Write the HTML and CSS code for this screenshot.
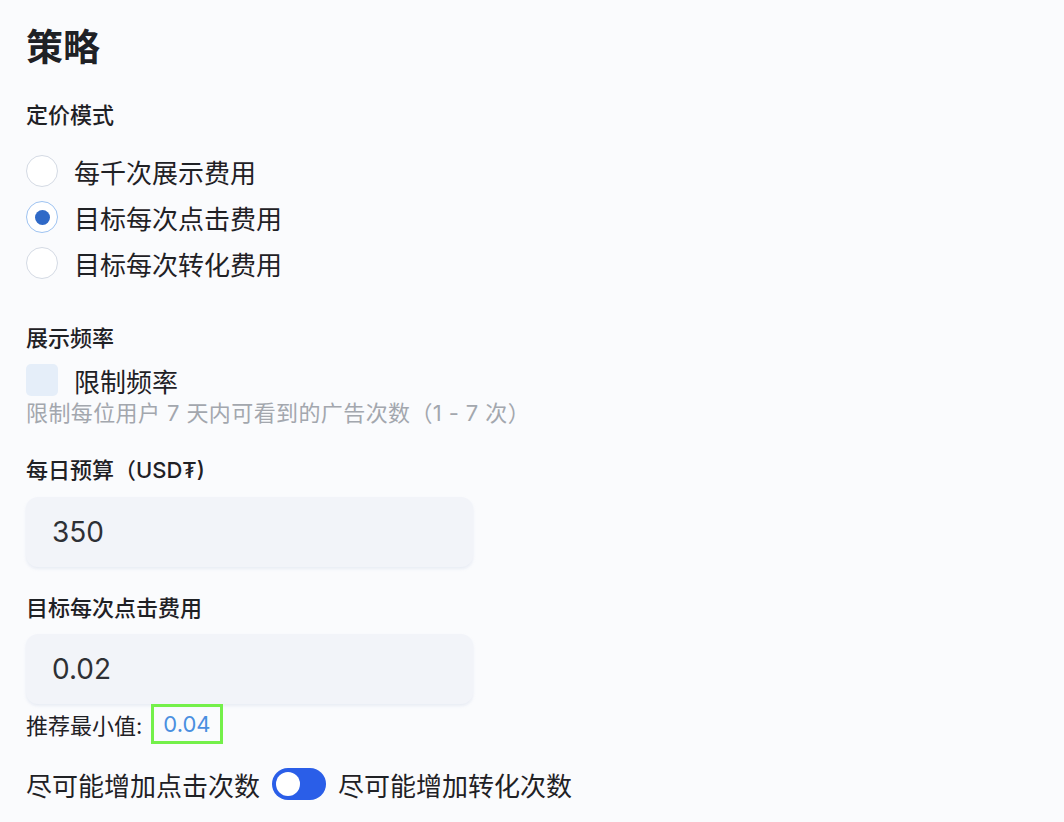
FILE: index.html
```html
<!DOCTYPE html>
<html lang="zh-CN">
  <head>
    <meta charset="UTF-8" />
    <meta name="viewport" content="width=device-width, initial-scale=1.0" />
    <title>策略</title>
    <link rel="stylesheet" href="styles.css">
  </head>
  <body>
    <h1 class="title">策略</h1>

    <div class="field-label pricing-label">定价模式</div>
    <div class="radio-group">
      <label class="radio-row">
        <span class="radio"></span>
        <span>每千次展示费用</span>
      </label>
      <label class="radio-row">
        <span class="radio checked"></span>
        <span>目标每次点击费用</span>
      </label>
      <label class="radio-row">
        <span class="radio"></span>
        <span>目标每次转化费用</span>
      </label>
    </div>

    <div class="field-label freq-label">展示频率</div>
    <label class="check-row">
      <span class="checkbox"></span>
      <span>限制频率</span>
    </label>
    <div class="helper">限制每位用户 7 天内可看到的广告次数（1 - 7 次）</div>

    <div class="field-label budget-label">每日预算（USD₮)</div>
    <div class="input-box">350</div>

    <div class="field-label cpc-label">目标每次点击费用</div>
    <div class="input-box">0.02</div>
    <div class="tip-row">
      <span>推荐最小值:</span>
      <span class="tip-value">0.04</span>
    </div>

    <div class="toggle-row">
      <span>尽可能增加点击次数</span>
      <span class="toggle"><span class="knob"></span></span>
      <span>尽可能增加转化次数</span>
    </div>
  </body>
</html>
```

FILE: styles.css
```css
body {
  margin: 0;
  padding: 24px 26px 0;
  background-color: #fafbfd;
  color: #1f2125;
  font-family: Inter, "Noto Sans CJK SC", sans-serif;
}
.title {
  margin: 0;
  font-size: 37px;
  line-height: 48px;
  font-weight: 700;
}
.field-label {
  font-size: 22px;
  line-height: 30px;
  font-weight: 500;
}
.pricing-label {
  margin-top: 28px;
}
.freq-label {
  margin-top: 37px;
}
.budget-label {
  margin-top: 27px;
}
.cpc-label {
  margin-top: 26px;
}
.radio-group {
  margin-top: 18px;
}
.radio-row,
.check-row {
  display: flex;
  align-items: center;
  gap: 16px;
  height: 46px;
  font-size: 26px;
}
.radio {
  box-sizing: border-box;
  width: 32px;
  height: 32px;
  border: 1px solid #d4dae4;
  border-radius: 50%;
  background-color: #fff;
  display: flex;
  align-items: center;
  justify-content: center;
}
.radio.checked {
  border-color: #9ec3f1;
}
.radio.checked::after {
  content: "";
  width: 15px;
  height: 15px;
  border-radius: 50%;
  background-color: #2f69c7;
}
.check-row {
  height: 32px;
  margin-top: 11px;
}
.checkbox {
  width: 32px;
  height: 32px;
  border-radius: 5px;
  background-color: #e5eef9;
}
.helper {
  margin-top: 2px;
  font-size: 22px;
  line-height: 30px;
  letter-spacing: 0.4px;
  color: #a3a7ae;
}
.input-box {
  box-sizing: border-box;
  width: 447px;
  height: 70px;
  margin-top: 12px;
  padding: 0 26px;
  display: flex;
  align-items: center;
  border-radius: 12px;
  background-color: #f2f4f9;
  box-shadow: 0 2px 3px rgba(200, 210, 230, 0.35);
  font-size: 28px;
  color: #2e3035;
}
.cpc-label + .input-box {
  margin-top: 11px;
}
.tip-row {
  display: flex;
  align-items: center;
  height: 40px;
  font-size: 22px;
}
.tip-value {
  box-sizing: border-box;
  height: 40px;
  margin-left: 9px;
  padding: 0 9px;
  display: flex;
  align-items: center;
  border: 3px solid #74f04a;
  color: #4a8fe0;
}
.toggle-row {
  display: flex;
  align-items: center;
  gap: 12px;
  margin-top: 24px;
  height: 32px;
  font-size: 26px;
}
.toggle {
  width: 54px;
  height: 32px;
  border-radius: 16px;
  background-color: #2a5ee8;
  display: flex;
  align-items: center;
  padding-left: 4px;
  box-sizing: border-box;
}
.knob {
  width: 24px;
  height: 24px;
  border-radius: 50%;
  background-color: #fff;
}
```
